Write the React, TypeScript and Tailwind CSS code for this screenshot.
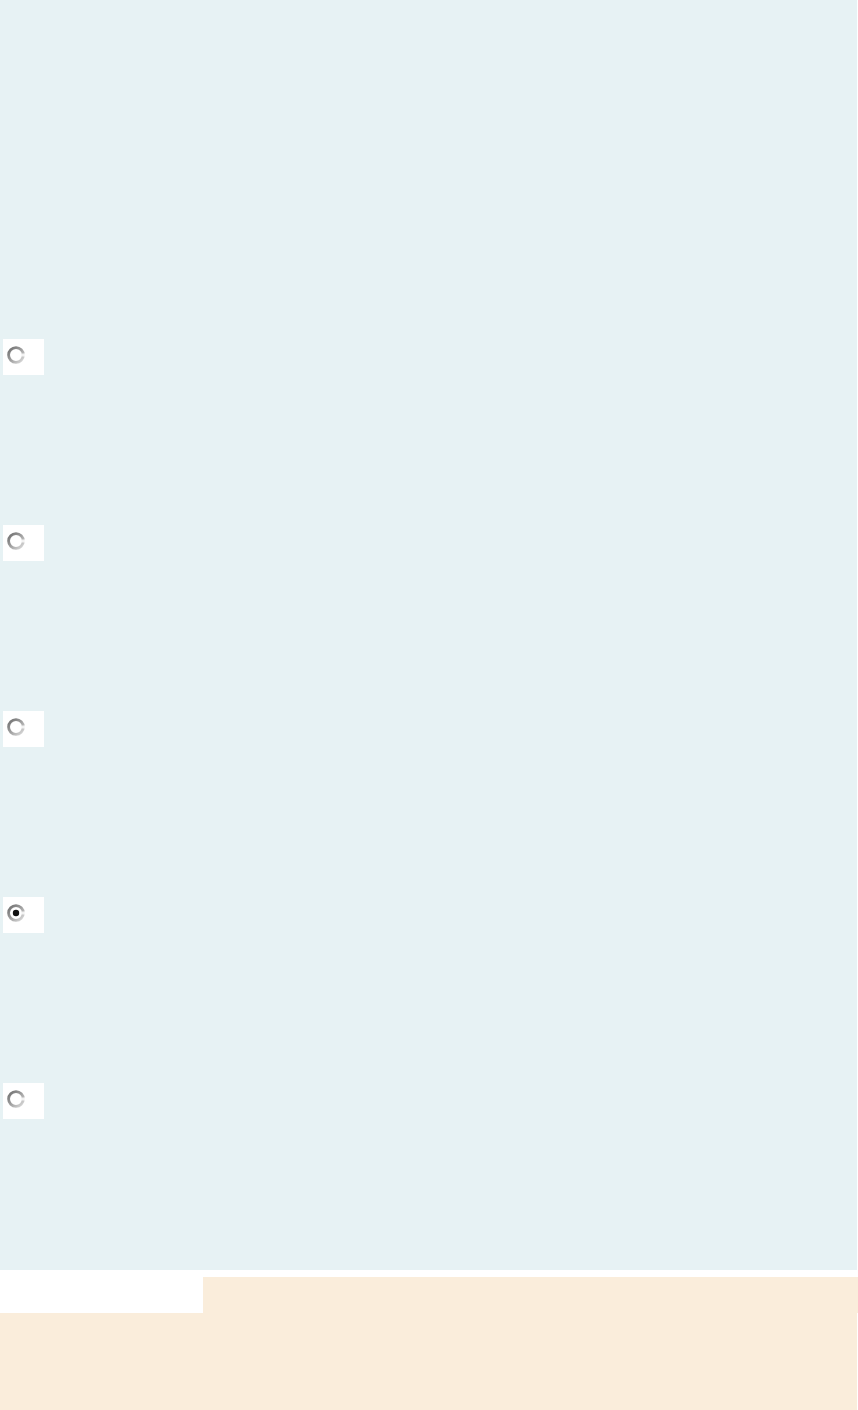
import React from "react";

function Radio({ checked }: { checked?: boolean }) {
  const id = checked ? "rg1" : "rg0";
  return (
    <svg width="20" height="20" viewBox="0 0 20 20">
      <defs>
        <linearGradient id={id} x1="0" y1="0" x2="1" y2="1">
          <stop offset="0" stopColor="#6e6e6e" />
          <stop offset="0.5" stopColor="#a0a0a0" />
          <stop offset="1" stopColor="#dedede" />
        </linearGradient>
      </defs>
      <circle cx="10" cy="10" r="7.4" fill="#ffffff" stroke={`url(#${id})`} strokeWidth="2.8" />
      <rect x="16" y="8.5" width="4" height="3" fill="#ffffff" opacity="0.8" />
      {checked && <circle cx="10" cy="10" r="3.2" fill="#111111" />}
    </svg>
  );
}

function RadioBox({ checked }: { checked?: boolean }) {
  return (
    <div className="ml-[3px] flex h-[36px] w-[41px] items-start bg-white pl-[3px] pt-[6px]">
      <Radio checked={checked} />
    </div>
  );
}

export default function App() {
  return (
    <div className="min-h-[1410px] w-full bg-white font-['Liberation_Sans',sans-serif]">
      <div className="mr-[1px] flex h-[1270px] flex-col gap-[150px] bg-[#e7f2f4] pt-[339px]">
        <RadioBox />
        <RadioBox />
        <RadioBox />
        <RadioBox checked />
        <RadioBox />
      </div>
      <div className="h-[7px] bg-white" />
      <div className="flex h-[36px]">
        <div className="w-[203px] bg-white" />
        <div className="flex-1 bg-[#faeddb]" />
      </div>
      <div className="mr-[1px] h-[97px] bg-[#faeddb]" />
    </div>
  );
}
